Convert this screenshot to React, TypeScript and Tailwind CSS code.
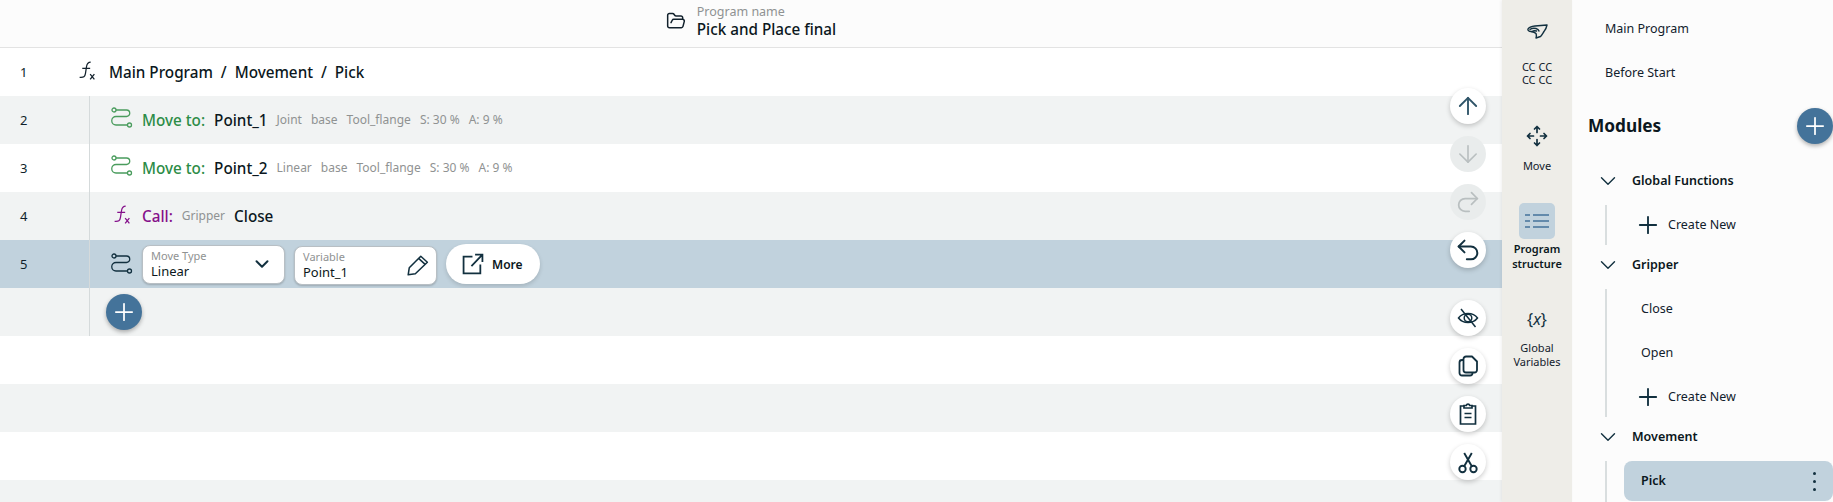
import type { ReactNode } from 'react'
import { ArrowDown, ArrowUp, ChevronDown, FolderOpen, Plus, Redo2, Undo2 } from 'lucide-react'

const font = 'font-["Noto_Sans",sans-serif]'

function PathIcon({ className }: { className: string }) {
  return (
    <svg viewBox="0 0 22 22" fill="none" stroke="currentColor" strokeWidth="1.3" className={className}>
      <circle cx="3" cy="3" r="2" />
      <circle cx="18.5" cy="18" r="2" />
      <path d="M5 3h10.5a3 3 0 0 1 0 6.500H5a3.600 3.600 0 0 0 0 8.500h11.500" />
    </svg>
  )
}

function FxIcon({ className }: { className: string }) {
  return (
    <svg viewBox="0 0 16 19" fill="none" stroke="currentColor" strokeWidth="1.2" className={className}>
      <path d="M11.500 1C8.800 1 8 2.500 7.600 5L6.500 12C6 15 5 15.800 1 15.500" />
      <path d="M3.500 7h7.500" />
      <path d="M11 12.500l4 5M15 12.500l-4 5" />
    </svg>
  )
}

function HandIcon() {
  return (
    <svg viewBox="0 0 21 15" fill="none" stroke="currentColor" strokeWidth="1.4" strokeLinejoin="round" strokeLinecap="round" className="w-[21px] h-[15px] text-[#12303f]">
      <path d="M20 1L8 2C5 2.300 2 3 1 5C.6 6.500 2 7.500 4 7.500C6 7.800 8 8.500 9 9.500C9.500 11 9.500 12.500 9 14L13.500 12.500C15 11 16 9 17 7.500C18.500 6 19.500 3.500 20 1Z" />
      <path d="M3 5.500C4.500 4.300 7 4 9 4.500C10.500 5 11.500 5.500 12 7" />
      <path d="M5 7.500C6.500 6.500 8 6.500 9.500 7" />
    </svg>
  )
}

function MoveCross() {
  return (
    <svg viewBox="0 0 22 22" fill="none" stroke="currentColor" strokeWidth="1.7" strokeLinecap="round" strokeLinejoin="round" className="w-[22px] h-[22px] text-[#12303f]">
      <path d="M11 1.500v6M8.500 4L11 1.500 13.500 4" />
      <path d="M11 14.500v6M8.500 18l2.500 2.500 2.500-2.500" />
      <path d="M1.500 11h6M4 8.500L1.500 11 4 13.500" />
      <path d="M14.500 11h6M18 8.500l2.500 2.500-2.500 2.500" />
    </svg>
  )
}

function ListIcon() {
  return (
    <svg viewBox="0 0 24 14" fill="none" stroke="#44739a" strokeWidth="1.6" className="w-6 h-[14px]">
      <path d="M0 1h5M8 1h16M0 7h5M8 7h16M0 13h5M8 13h16" />
    </svg>
  )
}

function PencilIcon() {
  return (
    <svg viewBox="0 0 21 21" fill="none" stroke="currentColor" strokeWidth="1.4" strokeLinejoin="round" className="w-[23px] h-[23px] text-[#12303f]">
      <path d="M2 19l1-6.500L13.500 2 19.500 7.500 8.500 18z" />
      <path d="M11.500 4l6 5.500" />
    </svg>
  )
}

function ExternalIcon() {
  return (
    <svg viewBox="0 0 21 21" fill="none" stroke="currentColor" strokeWidth="1.7" className="w-[22px] h-[22px] text-[#12303f]">
      <path d="M10 3.500H1.500v16h16V11" />
      <path d="M9 12.500L19.500 1.500M12.500 1.500h7v7" />
    </svg>
  )
}

function EyeSlashIcon() {
  return (
    <svg viewBox="0 0 22 22" fill="none" stroke="currentColor" strokeWidth="1.5" className="w-[22px] h-[22px]">
      <path d="M1.500 11C6 5 16 5 20.500 11C16 17 6 17 1.500 11Z" />
      <circle cx="11" cy="11" r="3.800" />
      <path d="M4 2l14.500 18" />
    </svg>
  )
}

function CopyIcon() {
  return (
    <svg viewBox="0 0 24 24" fill="none" stroke="currentColor" strokeWidth="1.800" strokeLinejoin="round" className="w-6 h-6">
      <path d="M10 2.500h6l5 5V16a2.500 2.500 0 0 1-2.500 2.500H10A2.500 2.500 0 0 1 7.500 16V5A2.500 2.500 0 0 1 10 2.500Z" />
      <path d="M7.500 6H6a2.500 2.500 0 0 0-2.500 2.500V19A2.500 2.500 0 0 0 6 21.500h8a2.500 2.500 0 0 0 2.500-2.500v-.500" />
    </svg>
  )
}

function ClipboardIcon() {
  return (
    <svg viewBox="0 0 24 24" fill="none" stroke="currentColor" strokeWidth="1.700" className="w-6 h-6">
      <path d="M8 4H4.500v18h15V4H16" />
      <path d="M8 6V3.500h2.200a1.900 1.900 0 0 1 3.600 0H16V6z" />
      <path d="M8.500 11.500h7M8.500 15.500h7" />
    </svg>
  )
}

function ScissorsIcon() {
  return (
    <svg viewBox="0 0 24 24" fill="none" stroke="currentColor" strokeWidth="1.900" className="w-6 h-6">
      <circle cx="6.500" cy="19" r="3.200" />
      <circle cx="17.500" cy="19" r="3.200" />
      <path d="M8.200 16.300L15.800 3M15.800 16.300L8.200 3" />
    </svg>
  )
}

function Row({ num, tone, line = true, children }: { num?: number; tone: string; line?: boolean; children?: ReactNode }) {
  return (
    <div className={`h-12 flex items-stretch shrink-0 ${tone}`}>
      <div className="w-[89px] shrink-0 flex items-center pl-5 pt-[1px] text-[13px] text-[#0f1f2a]">{num}</div>
      {line ? (
        <div className="flex-1 flex items-center gap-[9px] border-l border-[#d5dadb] pl-[21px]">{children}</div>
      ) : (
        <div className="flex-1 flex items-center">{children}</div>
      )}
    </div>
  )
}

function MoveRow({ num, tone, point, meta }: { num: number; tone: string; point: string; meta: string[] }) {
  return (
    <Row num={num} tone={tone}>
      <PathIcon className="w-[22px] h-[22px] text-[#4a9c5d] -mt-1" />
      <span className="text-[15.25px] font-medium text-[#2c8c46]">Move to:</span>
      <span className="text-[15.25px] font-medium text-[#0b1720]">{point}</span>
      <span className="flex gap-[9px] text-xs text-[#8f9292]">
        {meta.map((item) => (
          <span key={item}>{item}</span>
        ))}
      </span>
    </Row>
  )
}

function FloatButton({ children, disabled = false }: { children: ReactNode; disabled?: boolean }) {
  return (
    <div
      className={`w-9 h-9 rounded-full flex items-center justify-center ${
        disabled ? 'bg-[#e9ecec] text-[#b9bfc0]' : 'bg-white text-[#12303f] shadow-[0_2px_5px_rgba(0,0,0,0.2)]'
      }`}
    >
      {children}
    </div>
  )
}

function AddButton() {
  return (
    <div className="w-9 h-9 rounded-full bg-[#44739a] flex items-center justify-center shadow-[0_2px_4px_rgba(0,0,0,0.3)]">
      <Plus className="w-7 h-7 text-white" strokeWidth={1.5} />
    </div>
  )
}

function RailItem({ icon, label, labelClass }: { icon: ReactNode; label: ReactNode; labelClass: string }) {
  return (
    <div className="flex flex-col items-center">
      <div className="w-9 h-9 flex items-center justify-center text-[#12303f]">{icon}</div>
      <div className={`text-[11px] text-center text-[#12212c] ${labelClass}`}>{label}</div>
    </div>
  )
}

function ModuleHead({ title }: { title: string }) {
  return (
    <div className="h-10 flex items-center pl-[23px] shrink-0">
      <ChevronDown className="w-[26px] h-[26px] text-[#12303f]" strokeWidth={1.3} />
      <span className="ml-[11px] text-[12.5px] font-semibold text-[#0b1720]">{title}</span>
    </div>
  )
}

function ModuleItem({ title }: { title: string }) {
  return <div className="h-10 mb-1 flex items-center pl-[36px] text-[12.5px] text-[#12212c]">{title}</div>
}

function CreateNew() {
  return (
    <div className="h-10 flex items-center pl-[29px] text-[12.5px] text-[#12212c]">
      <Plus className="w-7 h-7 text-[#12303f]" strokeWidth={1.6} />
      <span className="ml-[6px]">Create New</span>
    </div>
  )
}

export default function App() {
  return (
    <div className={`h-[502px] w-[1833px] flex overflow-hidden bg-white ${font}`}>
      <main className="relative w-[1502px] shrink-0 flex flex-col">
        <header className="h-12 shrink-0 flex items-center justify-center gap-[11px] bg-[#fcfcfc] border-b border-[#e3e3e3]">
          <FolderOpen className="w-5 h-5 text-[#12212c] -mt-[5px]" strokeWidth={1.8} />
          <div className="-mt-[2px]">
            <div className="text-[12.5px] leading-[14px] text-[#8f9292]">Program name</div>
            <div className="text-[15.25px] leading-[21px] font-medium text-[#0b1720]">Pick and Place final</div>
          </div>
        </header>

        <Row num={1} tone="bg-white" line={false}>
          <FxIcon className="w-[18px] h-5 -ml-[11px] -mt-[2px] mr-[13px] text-[#12212c]" />
          <span className="text-[15.25px] font-medium text-[#0b1720] whitespace-pre">Main Program  /  Movement  /  Pick</span>
        </Row>
        <MoveRow num={2} tone="bg-[#f1f3f3]" point="Point_1" meta={['Joint', 'base', 'Tool_flange', 'S: 30 %', 'A: 9 %']} />
        <MoveRow num={3} tone="bg-white" point="Point_2" meta={['Linear', 'base', 'Tool_flange', 'S: 30 %', 'A: 9 %']} />
        <Row num={4} tone="bg-[#f1f3f3]">
          <div className="w-[22px] flex justify-center">
            <FxIcon className="w-[18px] h-5 text-[#85108a] -mt-[2px]" />
          </div>
          <span className="text-[15.25px] font-medium text-[#85108a]">Call:</span>
          <span className="text-xs text-[#8f9292]">Gripper</span>
          <span className="text-[15.25px] font-medium text-[#0b1720]">Close</span>
        </Row>
        <Row num={5} tone="bg-[#c1d2dd]">
          <PathIcon className="w-[22px] h-[22px] text-[#12303f]" />
          <div className="w-[143px] h-[39px] bg-white rounded-lg border border-[#b8bfc4] shadow-[0_1px_2px_rgba(0,0,0,0.2)] flex items-center justify-between pl-[8px] pr-[11px]">
            <div>
              <div className="text-[11px] leading-[13px] text-[#8f9292]">Move Type</div>
              <div className="text-[13px] leading-[18px] text-[#0b1720]">Linear</div>
            </div>
            <ChevronDown className="w-[22px] h-[22px] text-[#12303f]" strokeWidth={2.2} />
          </div>
          <div className="w-[143px] h-[39px] mt-[2px] bg-white rounded-lg border border-[#b8bfc4] shadow-[0_1px_2px_rgba(0,0,0,0.2)] flex items-center justify-between pl-[8px] pr-[7px]">
            <div>
              <div className="text-[11px] leading-[13px] text-[#8f9292]">Variable</div>
              <div className="text-[13px] leading-[18px] text-[#0b1720]">Point_1</div>
            </div>
            <PencilIcon />
          </div>
          <div className="w-[94px] h-10 bg-white rounded-full shadow-[0_2px_4px_rgba(0,0,0,0.15)] flex items-center pl-[16px] gap-[8px]">
            <ExternalIcon />
            <span className="text-xs font-semibold text-[#0b1720] mt-[1px]">More</span>
          </div>
        </Row>
        <Row tone="bg-[#f1f3f3]">
          <div className="-ml-[5px]">
            <AddButton />
          </div>
        </Row>
        <div className="h-12 shrink-0 bg-white" />
        <div className="h-12 shrink-0 bg-[#f1f3f3]" />
        <div className="h-12 shrink-0 bg-white" />
        <div className="flex-1 bg-[#f1f3f3]" />

        <div className="absolute left-[1450px] top-[88px] flex flex-col gap-3">
          <FloatButton>
            <ArrowUp className="w-7 h-7 text-[#2f5468]" strokeWidth={1.6} />
          </FloatButton>
          <FloatButton disabled>
            <ArrowDown className="w-7 h-7" strokeWidth={1.4} />
          </FloatButton>
          <FloatButton disabled>
            <Redo2 className="w-7 h-7" strokeWidth={1.5} />
          </FloatButton>
          <FloatButton>
            <Undo2 className="w-7 h-7" strokeWidth={1.7} />
          </FloatButton>
        </div>
        <div className="absolute left-[1450px] top-[300px] flex flex-col gap-3">
          <FloatButton>
            <EyeSlashIcon />
          </FloatButton>
          <FloatButton>
            <CopyIcon />
          </FloatButton>
          <FloatButton>
            <ClipboardIcon />
          </FloatButton>
          <FloatButton>
            <ScissorsIcon />
          </FloatButton>
        </div>
      </main>

      <nav className="w-[70px] shrink-0 bg-[#eeede8] flex flex-col gap-[30px] pt-[13px] shadow-[-1px_0_3px_rgba(0,0,0,0.06)] z-10">
        <RailItem
          icon={<HandIcon />}
          labelClass="leading-[13px] mt-[11px] mb-[2px]"
          label={
            <>
              CC CC
              <br />
              CC CC
            </>
          }
        />
        <RailItem icon={<MoveCross />} labelClass="leading-[14px] mt-[5px]" label="Move" />
        <div className="flex flex-col items-center">
          <div className="w-9 h-9 rounded-[5px] bg-[#c1d2dd] flex items-center justify-center">
            <ListIcon />
          </div>
          <div className="text-[11px] leading-[15px] mt-[2px] font-semibold text-center text-[#0b1720]">
            Program
            <br />
            structure
          </div>
        </div>
        <RailItem
          icon={
            <span className="text-[16px] text-[#12303f]">
              {'{'}
              <i>x</i>
              {'}'}
            </span>
          }
          labelClass="leading-[13.5px] mt-1"
          label={
            <>
              Global
              <br />
              Variables
            </>
          }
        />
      </nav>

      <aside className="flex-1 min-w-0 bg-[#fcfcfc] flex flex-col overflow-hidden">
        <div className="h-11 mt-[7px] flex items-center pl-[33px] text-[12.5px] text-[#12212c] shrink-0">Main Program</div>
        <div className="h-11 flex items-center pl-[33px] text-[12.5px] text-[#12212c] shrink-0">Before Start</div>
        <div className="h-9 mt-[13px] flex items-center justify-between pl-[16px] shrink-0">
          <span className="text-[17.25px] font-bold text-[#0b1720]">Modules</span>
          <AddButton />
        </div>
        <div className="mt-[17px]">
          <ModuleHead title="Global Functions" />
        </div>
        <div className="ml-[33px] border-l-2 border-[#d9dedf] h-10 mt-1 shrink-0">
          <div className="-ml-[2px]">
            <CreateNew />
          </div>
        </div>
        <ModuleHead title="Gripper" />
        <div className="ml-[33px] border-l-2 border-[#d9dedf] mt-1 h-[128px] shrink-0">
          <div className="-ml-[2px]">
            <ModuleItem title="Close" />
            <ModuleItem title="Open" />
            <CreateNew />
          </div>
        </div>
        <ModuleHead title="Movement" />
        <div className="ml-[33px] border-l-2 border-[#d9dedf] mt-1 flex-1">
          <div className="ml-[17px] h-10 rounded-lg bg-[#c1d2dd] flex items-center justify-between pl-[17px] pr-[17px] text-[12.5px] font-semibold text-[#0b1720]">
            Pick
            <span className="flex flex-col gap-[5px]">
              <span className="w-[3px] h-[3px] rounded-full bg-[#12303f]" />
              <span className="w-[3px] h-[3px] rounded-full bg-[#12303f]" />
              <span className="w-[3px] h-[3px] rounded-full bg-[#12303f]" />
            </span>
          </div>
        </div>
      </aside>
    </div>
  )
}
